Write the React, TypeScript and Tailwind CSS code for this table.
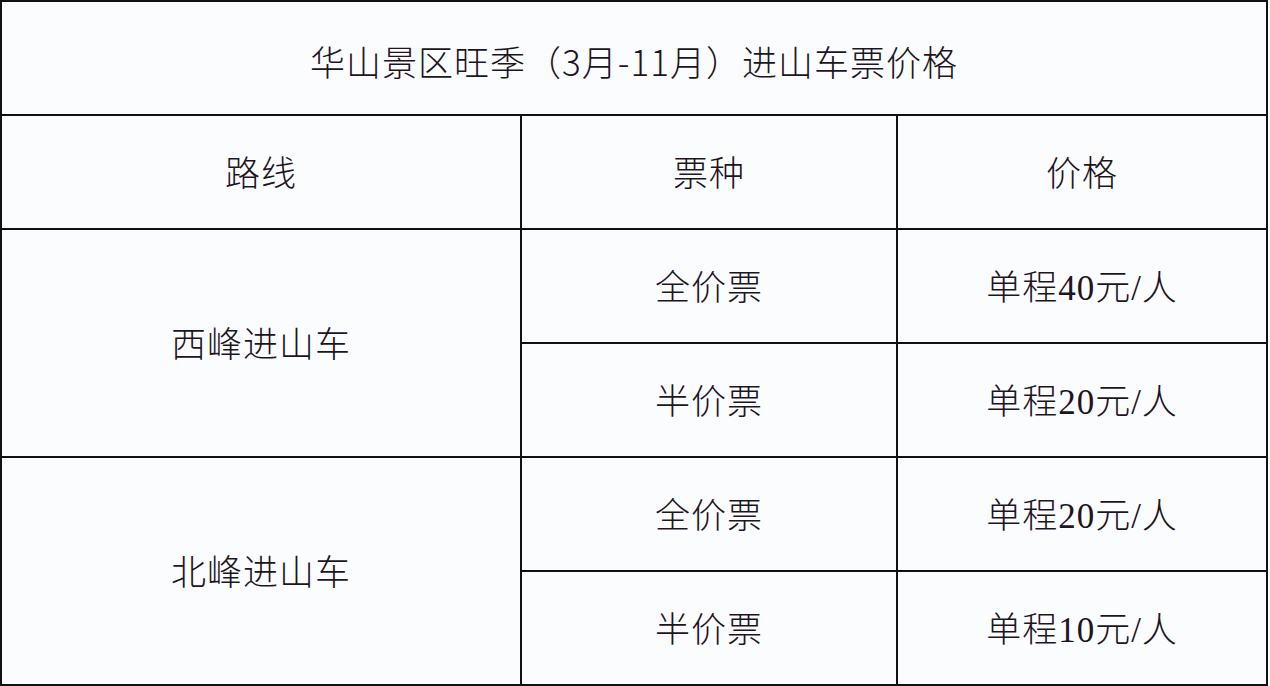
import { Fragment } from "react";

const cjk = "font-['Liberation_Serif','Noto_Sans_CJK_SC',sans-serif]";

const rows = [
  { route: "西峰进山车", items: [["全价票", "单程40元/人"], ["半价票", "单程20元/人"]] },
  { route: "北峰进山车", items: [["全价票", "单程20元/人"], ["半价票", "单程10元/人"]] },
];

function Cell({ children, className = "" }: { children: React.ReactNode; className?: string }) {
  return (
    <div
      className={`flex items-center justify-center bg-[#fbfcfe] pt-[6px] text-[35px] font-light tracking-[1px] text-[#1d1424] ${className}`}
    >
      {children}
    </div>
  );
}

export default function App() {
  return (
    <div className="min-h-[686px] w-[1270px] bg-[#fbfcfe]">
      <div
        className={`grid w-[1268px] grid-cols-[518px_374px_1fr] grid-rows-[repeat(6,112px)] gap-[2px] bg-[#111111] p-[2px] ${cjk}`}
      >
        <Cell className="col-span-3 font-['Noto_Sans_CJK_SC',sans-serif]">
          华山景区旺季（3月-11月）进山车票价格
        </Cell>
        <Cell>路线</Cell>
        <Cell>票种</Cell>
        <Cell>价格</Cell>
        {rows.map((r) => (
          <Fragment key={r.route}>
            <Cell className="row-span-2">{r.route}</Cell>
            <Cell>{r.items[0][0]}</Cell>
            <Cell>{r.items[0][1]}</Cell>
            <Cell>{r.items[1][0]}</Cell>
            <Cell>{r.items[1][1]}</Cell>
          </Fragment>
        ))}
      </div>
    </div>
  );
}
